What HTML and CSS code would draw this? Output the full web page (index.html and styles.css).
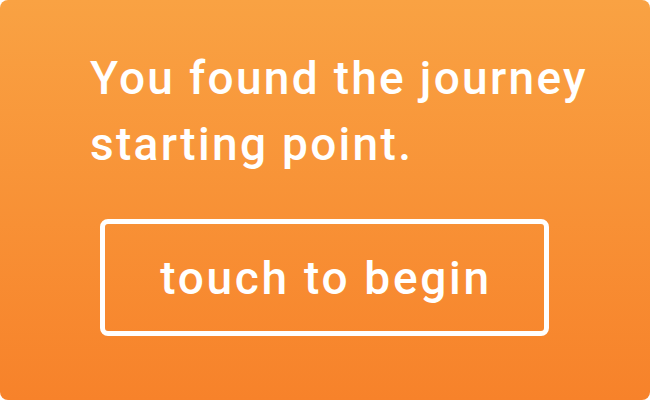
FILE: index.html
```html
<!DOCTYPE html>
<html>
<head>
<meta charset="utf-8">
<link rel="stylesheet" href="styles.css">
</head>
<body>
<div class="card">
  <h1 class="title">You found the journey<br>starting point.</h1>
  <button class="begin">touch to begin</button>
</div>
</body>
</html>
```
FILE: styles.css
```css
html, body {
  margin: 0;
  padding: 0;
  background: #ffffff;
}
.card {
  width: 650px;
  height: 400px;
  box-sizing: border-box;
  border-radius: 8px;
  background: linear-gradient(to bottom, #f9a243, #f7822a);
  display: flex;
  flex-direction: column;
  align-items: flex-start;
  padding: 45px 0 0 90px;
  font-family: Roboto, "Liberation Sans", sans-serif;
  color: #ffffff;
}
.title {
  margin: 0;
  font-size: 46px;
  font-weight: 500;
  line-height: 66px;
  letter-spacing: 2.3px;
}
.begin {
  margin: 42px 0 0 10px;
  width: 449px;
  height: 117px;
  box-sizing: border-box;
  border: 5px solid #ffffff;
  border-radius: 8px;
  background: transparent;
  color: #ffffff;
  font-family: Roboto, "Liberation Sans", sans-serif;
  font-size: 46px;
  font-weight: 500;
  letter-spacing: 2.7px;
  padding: 0 0 0 3px;
  cursor: pointer;
}
```
